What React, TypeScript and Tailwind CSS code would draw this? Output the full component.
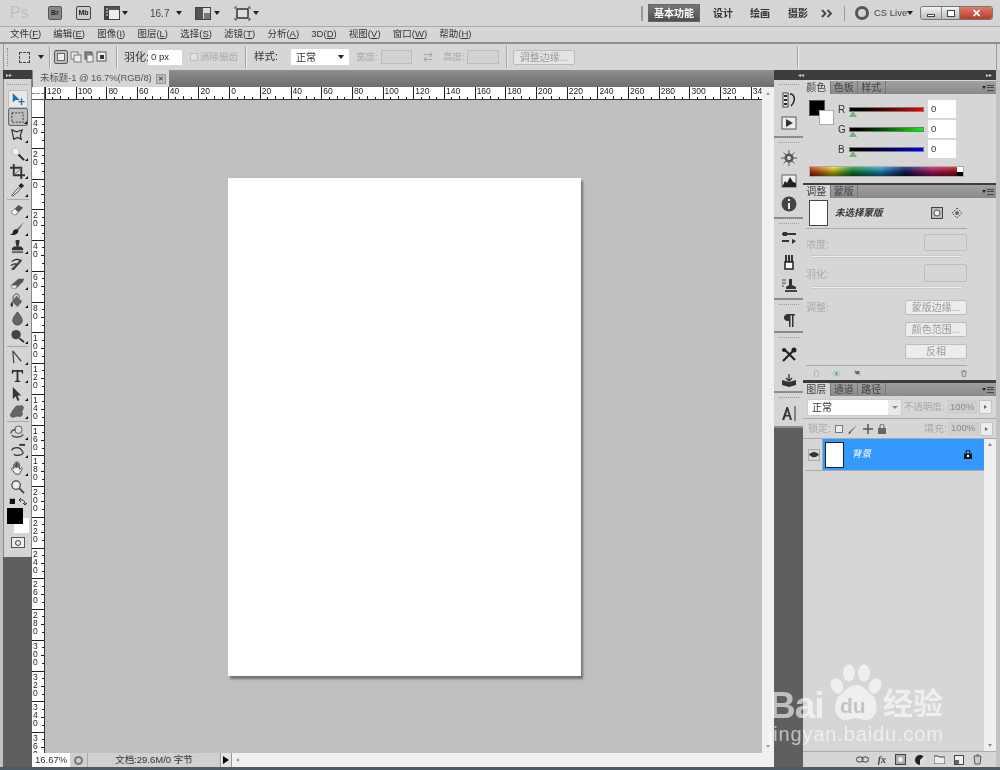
import type { ReactNode } from "react";

const menus = [
  ["文件(", "F", ")"],
  ["编辑(", "E", ")"],
  ["图像(", "I", ")"],
  ["图层(", "L", ")"],
  ["选择(", "S", ")"],
  ["滤镜(", "T", ")"],
  ["分析(", "A", ")"],
  ["3D(", "D", ")"],
  ["视图(", "V", ")"],
  ["窗口(", "W", ")"],
  ["帮助(", "H", ")"],
];

const hLabels = [120, 100, 80, 60, 40, 20, 0, 20, 40, 60, 80, 100, 120, 140, 160, 180, 200, 220, 240, 260, 280, 300, 320, 340];
const vLabels = ["40", "20", "0", "20", "40", "60", "80", "100", "120", "140", "160", "180", "200", "220", "240", "260", "280", "300", "320", "340", "360"];

function Icon({ children, size = 16, view = 16 }: { children: ReactNode; size?: number; view?: number }) {
  return (
    <svg width={size} height={size} viewBox={`0 0 ${view} ${view}`} className="shrink-0">
      {children}
    </svg>
  );
}

// photoshop tools, top to bottom. null is a divider
const tools: (ReactNode | null)[] = [
  <g key="move"><path d="M2 1v11l3-3h5z" fill="#1f6fb0" /><path d="M12 7v8M8.500 11h7" stroke="#1f6fb0" strokeWidth="1.500" /></g>,
  <rect key="marquee" x="2" y="3" width="12" height="10" fill="none" stroke="#333" strokeDasharray="2 1.500" />,
  <path key="lasso" d="M2 2l5 2 6-2-2 6 1 4-4-2-4 2-1-5z" fill="none" stroke="#333" strokeWidth="1.300" />,
  <g key="wand"><path d="M8 8l7 7" stroke="#222" strokeWidth="2" /><circle cx="6" cy="6" r="4" fill="#eee" stroke="#999" strokeDasharray="1.500 1" /></g>,
  <g key="crop"><path d="M4 0v12h12M0 4h12v12" fill="none" stroke="#333" strokeWidth="2" /><path d="M12 4L4 12" stroke="#777" /></g>,
  <g key="dropper"><path d="M2 14l7-8 2 2-8 7z" fill="#eee" stroke="#444" /><path d="M9 4l3-3 3 3-3 3z" fill="#222" /></g>,
  null,
  <g key="heal"><path d="M1 10l8-8 5 3-8 8z" fill="#555" /><path d="M1 10l4-4 4 4-4 3z" fill="#f2f2f2" stroke="#888" /></g>,
  <g key="brush"><path d="M15 1L7 9l1.500 1.500z" fill="#555" /><path d="M8 9c-3-1-5 1-5 3s-2 2-3 2c3 2 8 1 9-3z" fill="#222" /></g>,
  <g key="stamp"><path d="M6 1h4v3l-1 4h3l2 2v2H2v-2l2-2h3L6 4z" fill="#333" /><rect x="2" y="13" width="12" height="2" fill="#666" /></g>,
  <g key="history"><path d="M1 13l9-9 3-2-1 3-8 9z" fill="#444" /><path d="M2 5c3-3 7-3 9-1M1 9c3-2 5-2 6-1" fill="none" stroke="#222" strokeWidth="1.300" /></g>,
  <g key="eraser"><path d="M1 11l8-7h6l-1 3-7 7H2z" fill="#555" /><path d="M1 11h6v3H2z" fill="#eee" stroke="#777" strokeWidth=".6" /></g>,
  <g key="bucket"><path d="M7 3l6 6-5 6-6-6z" fill="#666" /><path d="M4 8c-2-3 0-7 3-7s3 3 3 4" fill="none" stroke="#444" /><path d="M2 9c-1 2-2 3-1 5s3 0 2-3z" fill="#333" /></g>,
  <path key="drop" d="M8 1c2 3 5 6 5 9a5 5 0 01-10 0c0-3 3-6 5-9z" fill="#666" stroke="#444" />,
  <g key="burn"><circle cx="6.500" cy="6" r="5" fill="#444" /><path d="M10 10l5 4" stroke="#222" strokeWidth="2" /></g>,
  null,
  <path key="pen" d="M3 1l1 13M3 1l9 11" fill="none" stroke="#444" strokeWidth="1.300" />,
  <path key="type" d="M2 2h12v4h-1l-1-2H9v9l2 1v1H5v-1l2-1V4H4L3 6H2z" fill="#333" />,
  <path key="select" d="M3 1l9 9H8l2 5-2 1-2-5-3 3z" fill="#333" />,
  <path key="shape" d="M2 9c1-3 3-4 4-6 2-2 3 0 5-1s4 1 3 3-2 3-1 5-2 4-4 3-3 1-6 1-3-3-1-5z" fill="#666" stroke="#555" />,
  null,
  <g key="rotate3d"><circle cx="9" cy="5" r="4" fill="#ddd" stroke="#555" /><path d="M1 9c0-4 4-4 5-4M14 10c-1 3-9 4-12 1" fill="none" stroke="#333" strokeWidth="1.300" /></g>,
  <g key="orbit"><path d="M2 8c0-3 6-4 9-2l3 4c0 3-8 4-10 2" fill="none" stroke="#333" strokeWidth="1.300" /><rect x="10" y="1" width="6" height="2" fill="#333" /></g>,
  <path key="hand" d="M4 8V4c0-1 1.500-1 1.500 0v3-5c0-1 1.500-1 1.500 0v5-5.500c0-1 1.500-1 1.500 0V7V3c0-1 1.500-1 1.500 0v6l1.500-1.500c1-1 2 0 1.500 1l-3 5.500H6L2 9c-1-1 0-2 1-1.500z" fill="#eee" stroke="#444" />,
  <g key="zoom"><circle cx="6.500" cy="6.500" r="4.500" fill="#eee" stroke="#444" strokeWidth="1.300" /><path d="M10 10l5 5" stroke="#444" strokeWidth="2" /></g>,
];

const dockGroups: { gap: string; pad: string; icons: ReactNode[] }[] = [
  {
    gap: "gap-[7px]",
    pad: "pb-[5px]",
    icons: [
      <g key="hist"><rect x="2" y="1" width="5" height="14" fill="#eee" stroke="#444" /><path d="M3 4h3M3 8h3M3 12h3" stroke="#222" strokeWidth="2" /><path d="M9 2c5 0 6 7 1 12" fill="none" stroke="#222" strokeWidth="1.500" /></g>,
      <g key="act"><rect x="1" y="2" width="14" height="12" fill="#eee" stroke="#555" /><path d="M5 4l7 4-7 4z" fill="#333" /></g>,
    ],
  },
  {
    gap: "gap-[7px]",
    pad: "pb-[5px]",
    icons: [
      <g key="nav"><circle cx="8" cy="8" r="4.500" fill="#555" /><path d="M8 0v16M0 8h16M2.500 2.500l11 11M13.500 2.500l-11 11" stroke="#555" /><circle cx="8" cy="8" r="2" fill="#ddd" /></g>,
      <g key="histogram"><rect x="1" y="2" width="14" height="12" fill="#eee" stroke="#666" /><path d="M1 14l3-6 2 2 3-6 3 5 3 1v4z" fill="#222" /></g>,
      <g key="info"><circle cx="8" cy="8" r="7.500" fill="#444" /><path d="M7 3h2v2H7zM7 7h2v6H7z" fill="#eee" /></g>,
    ],
  },
  {
    gap: "gap-[7px]",
    pad: "pb-[5px]",
    icons: [
      <g key="adj"><path d="M1 3h14M1 10h7" stroke="#333" strokeWidth="2" /><path d="M2 1h4v4H2zM11 8l4 2-4 3z" fill="#333" /></g>,
      <g key="brushes"><path d="M5 1v7M8 1v7M11 1v7" stroke="#333" strokeWidth="2" /><path d="M4 8h8v7H4z" fill="#fff" stroke="#222" strokeWidth="1.500" /></g>,
      <g key="clone"><path d="M8 2h3v6l4 2v2H5v-2l3-2z" fill="#333" /><rect x="4" y="13" width="12" height="2" fill="#444" /><path d="M1 3h4M1 6h4M1 9h2" stroke="#444" /></g>,
    ],
  },
  {
    gap: "gap-[7px]",
    pad: "pb-[3px]",
    icons: [<path key="para" d="M7 2h7v1.500h-1.500V15H11V3.500H9.500V15H8V9C4 9 3 7.500 3 5.500S5 2 7 2z" fill="#333" />],
  },
  {
    gap: "gap-[9px]",
    pad: "pb-[3px]",
    icons: [
      <g key="tools"><path d="M2 14L13 3M3 2l11 11" stroke="#222" strokeWidth="2.200" /><circle cx="13" cy="3" r="2.500" fill="#222" /><circle cx="3" cy="3" r="2" fill="#222" /></g>,
      <g key="notes"><path d="M1 8l7 2 7-2v5l-7 2-7-2z" fill="#333" /><path d="M8 2v6M5 6l3 3 3-3" stroke="#333" strokeWidth="1.300" fill="none" /></g>,
    ],
  },
  {
    gap: "gap-[7px]",
    pad: "pb-[5px]",
    icons: [<g key="char"><path d="M1 15L5.500 2h1.500l4 13H9l-1-3.500H4.500L3.300 15zM5 10h2.500L6.300 5.500z" fill="#333" /><path d="M14 1v15" stroke="#333" /></g>],
  },
];

function Caret({ className = "" }: { className?: string }) {
  return <div className={`h-0 w-0 border-x-[3.500px] border-t-[4px] border-x-transparent border-t-[#222] ${className}`} />;
}

function VDivider() {
  return <div className="h-[22px] w-[2px] border-r border-[#eee] bg-[#a3a3a3]" />;
}

function TitleBar() {
  return (
    <div className="flex h-[27px] items-center border-b border-[#aaaaaa] bg-[#d5d5d5] pl-[10px] text-[#333]">
      <div className="w-[38px] text-[16px] text-[#bcbcbc]">Ps</div>
      <div className="flex h-[14px] w-[14px] items-center justify-center rounded-[2px] border border-[#555] bg-[#888] text-[7px] font-bold text-[#222]">Br</div>
      <div className="ml-[14px] flex h-[14px] w-[15px] items-center justify-center rounded-[2px] border border-[#444] bg-[#ccc] text-[7px] font-bold text-[#222]">Mb</div>
      <svg width="16" height="14" viewBox="0 0 16 14" className="ml-[13px]">
        <rect x=".5" y=".5" width="15" height="13" fill="#eee" stroke="#444" />
        <rect x="1" y="1" width="4" height="12" fill="#444" />
        <path d="M2 3h2M2 6h2M2 9h2" stroke="#eee" />
        <rect x="5" y="1" width="10" height="3" fill="#555" />
      </svg>
      <Caret className="ml-[2px]" />
      <div className="ml-[22px] w-[26px] text-[10px] text-[#444]">16.7</div>
      <Caret />
      <svg width="16" height="13" viewBox="0 0 16 13" className="ml-[13px]">
        <rect x=".5" y=".5" width="15" height="12" fill="#ddd" stroke="#444" />
        <rect x="1" y="1" width="7" height="11" fill="#555" />
        <rect x="9" y="6" width="6" height="6" fill="#777" />
      </svg>
      <Caret className="ml-[3px]" />
      <svg width="17" height="15" viewBox="0 0 17 15" className="ml-[14px]">
        <rect x="3" y="3" width="11" height="9" fill="#ddd" stroke="#333" strokeWidth="1.500" />
        <path d="M1 1h2M14 1h2M1 14h2M14 14h2M1 1v2M16 1v2M1 12v2M16 12v2" stroke="#444" />
      </svg>
      <Caret className="ml-[2px]" />
      <div className="ml-[382px] h-[15px] w-[2px] bg-[#999]" />
      <div className="ml-[5px] flex h-[18px] w-[52px] items-center justify-center border border-[#666] bg-gradient-to-b from-[#777] to-[#4f4f4f] text-[10px] font-bold text-white">基本功能</div>
      <div className="ml-[13px] w-[37px] text-[10px] font-bold text-[#333]">设计</div>
      <div className="w-[38px] text-[10px] font-bold text-[#333]">绘画</div>
      <div className="w-[33px] text-[10px] font-bold text-[#333]">摄影</div>
      <svg width="12" height="9" viewBox="0 0 12 9"><path d="M1 1l3.500 3.500L1 8M6.500 1L10 4.500 6.500 8" fill="none" stroke="#444" strokeWidth="1.800" /></svg>
      <div className="ml-[11px] h-[15px] w-px bg-[#999]" />
      <div className="ml-[10px] h-[14px] w-[14px] rounded-full border-[3px] border-[#555]" />
      <div className="ml-[5px] w-[33px] text-[9.500px] text-[#444]">CS Live</div>
      <Caret />
      <div className="ml-[7px] flex h-[14px] w-[73px] overflow-hidden rounded-[3px] border border-[#777]">
        <div className="flex w-[20px] items-end justify-center bg-gradient-to-b from-[#f2f2f2] to-[#bbb] pb-[2px]">
          <div className="h-[3px] w-[8px] border border-[#444] bg-white" />
        </div>
        <div className="flex w-[19px] items-center justify-center border-x border-[#888] bg-gradient-to-b from-[#f2f2f2] to-[#bbb]">
          <div className="h-[7px] w-[8px] border border-[#444] bg-white" />
        </div>
        <div className="flex flex-1 items-center justify-center bg-gradient-to-b from-[#dd7a68] to-[#b93a2a] text-[11px] leading-none font-bold text-white">✕</div>
      </div>
    </div>
  );
}

function MenuBar() {
  return (
    <div className="flex h-[17px] items-center gap-[12.200px] border-b-2 border-[#8f8f8f] bg-[#d6d6d6] pl-[10px] text-[9.500px] text-[#333]">
      {menus.map((m) => (
        <span key={m[1]}>
          {m[0]}
          <span className="underline">{m[1]}</span>
          {m[2]}
        </span>
      ))}
    </div>
  );
}

function OptionsBar() {
  return (
    <div className="mx-[3px] flex h-[26px] items-center border-x border-[#999] bg-[#d6d6d6] text-[10px] text-[#333]">
      <div className="ml-[3px] h-[18px] w-[2px] border-l border-dotted border-[#888]" />
      <div className="ml-[10px] h-[11px] w-[11px] border border-dashed border-[#444]" />
      <Caret className="ml-[8px] border-x-[2.500px] border-t-[3px]" />
      <div className="mr-[3px] ml-[5px]"><VDivider /></div>
      <div className="h-[14px] w-[14px] rounded-[2px] border border-[#555] bg-[#bbb] p-[2px]"><div className="h-full w-full border border-[#666] bg-[#eee]" /></div>
      <svg width="38" height="14" viewBox="0 0 38 14" className="ml-[2px]">
        <rect x="1" y="2" width="7" height="7" fill="#eee" stroke="#777" />
        <rect x="4" y="5" width="7" height="7" fill="#eee" stroke="#777" />
        <rect x="15" y="2" width="7" height="7" fill="#888" stroke="#555" />
        <rect x="17" y="5" width="6" height="7" fill="#eee" stroke="#777" />
        <rect x="27" y="2" width="9" height="9" fill="#eee" stroke="#555" />
        <rect x="30" y="5" width="4" height="4" fill="#333" />
      </svg>
      <div className="mr-[6px] ml-[8px]"><VDivider /></div>
      <span className="w-[24px] text-[11px]">羽化:</span>
      <div className="flex h-[15px] w-[34px] items-center bg-white pl-[3px] text-[9.500px]">0 px</div>
      <div className="ml-[8px] h-[8px] w-[8px] border border-[#bbb] bg-[#e2e2e2]" />
      <span className="ml-[2px] w-[45px] text-[9.500px] text-[#aaa]">消除锯齿</span>
      <VDivider />
      <span className="ml-[7px] w-[37px] text-[10.500px]">样式:</span>
      <div className="flex h-[16px] w-[58px] items-center justify-between bg-white px-[5px] text-[10px]">
        正常
        <Caret className="border-x-[3px] border-t-[3px]" />
      </div>
      <span className="ml-[7px] w-[25px] text-[9.500px] text-[#aaa]">宽度:</span>
      <div className="h-[14px] w-[31px] border border-[#bbb] bg-[#d2d2d2]" />
      <span className="ml-[11px] w-[20px] text-[10px] text-[#999]">⇄</span>
      <span className="w-[24px] text-[9.500px] text-[#aaa]">高度:</span>
      <div className="h-[14px] w-[32px] border border-[#bbb] bg-[#d2d2d2]" />
      <div className="mr-[5px] ml-[7px]"><VDivider /></div>
      <div className="flex h-[15px] w-[62px] items-center justify-center rounded-[2px] border border-[#bbb] bg-[#e4e4e4] text-[10px] text-[#999]">调整边缘...</div>
      <div className="ml-[222px]"><VDivider /></div>
    </div>
  );
}

function Toolbar() {
  return (
    <div className="flex w-[32px] shrink-0 flex-col border-l-[3px] border-[#c2c2c2] bg-[#5f5f5f]">
      <div className="flex h-[9px] items-center bg-[#3d3d3d] pl-[3px] text-[6px] leading-none text-[#ccc]">▸▸</div>
      <div className="flex h-[478px] flex-col items-center border-x border-[#888] bg-[#d5d5d5]">
        <div className="mt-[5px] mb-[3px] h-[3px] w-[22px] border-t border-dotted border-[#999]" />
        {tools.map((t, i) =>
          t === null ? (
            <div key={i} className="my-px h-px w-[22px] bg-[#aaa]" />
          ) : (
            <div
              key={i}
              className={`relative flex h-[18px] w-[20px] items-center justify-center rounded-[2px] ${i === 0 ? "border border-[#bbb] bg-[#e8e8e8]" : ""} ${i === 1 ? "border border-[#666] bg-[#bdbdbd]" : ""}`}
            >
              <Icon size={i === 0 ? 14 : 15}>{t}</Icon>
              {i > 0 && i !== 24 && (
                <div className="absolute right-[0px] bottom-[1px] h-0 w-0 border-b-[3px] border-l-[3px] border-b-[#111] border-l-transparent" />
              )}
            </div>
          ),
        )}
        <div className="mt-[3px] flex w-[20px] items-center justify-between px-[1px]">
          <svg width="8" height="8" viewBox="0 0 8 8"><rect x="0" y="0" width="5" height="5" fill="#eee" stroke="#777" /><rect x="1" y="1" width="5" height="5" fill="#111" /></svg>
          <svg width="9" height="8" viewBox="0 0 9 8"><path d="M1 2c4-1 6 1 6 4M1 2l2-2M1 2l2 2M7 7l-2-2M7 7l2-2" fill="none" stroke="#333" /></svg>
        </div>
        <div className="mt-[2px] mb-[5px] ml-[3px] h-[24px] w-[24px]">
          <div className="relative h-[16px] w-[16px] bg-black" />
          <div className="-mt-[6px] ml-[7px] h-[15px] w-[15px] bg-white" />
        </div>
        <div className="flex h-[11px] w-[14px] items-center justify-center border border-[#555] bg-[#eee]">
          <div className="h-[6px] w-[6px] rounded-full border border-[#444]" />
        </div>
      </div>
      <div className="flex-1" />
    </div>
  );
}

function HRuler() {
  return (
    <div className="flex h-[13px] shrink-0 bg-white">
      <div className="relative h-[13px] w-[13px] shrink-0 border-r border-b border-[#555] bg-white">
        <div className="absolute top-[6px] left-0 w-full border-t border-dashed border-[#777]" />
      </div>
      <div className="flex min-w-0 flex-1 overflow-hidden border-b border-[#333]">
        {hLabels.map((l, i) => (
          <div key={i} className="flex h-full w-[30.700px] shrink-0 flex-col border-l border-[#222]">
            <span className="h-[9px] pl-[1px] text-[8.500px] leading-[9px] text-[#222]">{l}</span>
            <div className="flex h-[3px] justify-around px-[3px]">
              <div className="mt-px h-[2px] w-px bg-[#222]" />
              <div className="h-[3px] w-px bg-[#222]" />
              <div className="mt-px h-[2px] w-px bg-[#222]" />
            </div>
          </div>
        ))}
      </div>
    </div>
  );
}

function VRuler() {
  return (
    <div className="flex w-[13px] shrink-0 flex-col overflow-hidden border-r border-[#333] bg-white">
      <div className="h-[17px] shrink-0" />
      {vLabels.map((l, i) => (
        <div key={i} className="flex h-[30.750px] w-full shrink-0 justify-between border-t border-[#222]">
          <div className="flex flex-col pt-px pl-[1px] text-[8.500px] leading-[8px] text-[#222]">
            {l.split("").map((d, j) => (
              <span key={j}>{d}</span>
            ))}
          </div>
          <div className="flex h-full flex-col items-end justify-around py-[3px]">
            <div className="h-px w-[2px] bg-[#222]" />
            <div className="h-px w-[3px] bg-[#222]" />
            <div className="h-px w-[2px] bg-[#222]" />
          </div>
        </div>
      ))}
    </div>
  );
}

function StatusBar() {
  return (
    <div className="flex h-[14px] shrink-0 items-center bg-[#d6d6d6] text-[9.500px] text-[#333]">
      <div className="flex h-full w-[38px] items-center bg-white pl-[3px]">16.67%</div>
      <div className="flex h-full w-[18px] items-center justify-center border-r border-[#aaa] bg-[#cfcfcf]">
        <div className="h-[9px] w-[9px] rounded-full border-2 border-[#777]" />
      </div>
      <div className="flex h-full w-[133px] items-center justify-center border-r border-[#999] bg-[#d0d0d0]">文档:29.6M/0 字节</div>
      <div className="flex h-full w-[11px] items-center justify-center border-r border-[#999] bg-[#e4e4e4]">
        <div className="h-0 w-0 border-y-[4px] border-l-[6px] border-y-transparent border-l-black" />
      </div>
      <div className="flex h-full flex-1 items-center bg-[#f0f0f0] pl-[4px]">
        <div className="h-0 w-0 border-y-[2.500px] border-r-[3.500px] border-y-transparent border-r-[#999]" />
      </div>
    </div>
  );
}

function Workspace() {
  return (
    <div className="flex w-[742px] shrink-0 flex-col">
      <div className="flex h-[17px] shrink-0 bg-gradient-to-b from-[#8f8f8f] to-[#6e6e6e]">
        <div className="ml-px flex w-[136px] items-center justify-between rounded-t-[1px] bg-[#d6d6d6] pr-[3px] pl-[7px] text-[9.500px] tracking-[-0.1px] text-[#555]">
          未标题-1 @ 16.7%(RGB/8)
          <div className="flex h-[10px] w-[10px] items-center justify-center border border-[#999] bg-[#bbb] text-[7px] leading-none text-[#333]">✕</div>
        </div>
      </div>
      <div className="flex min-h-0 flex-1">
        <div className="flex min-w-0 flex-1 flex-col">
          <HRuler />
          <div className="flex min-h-0 flex-1">
            <VRuler />
            <div className="min-w-0 flex-1 bg-[#bfbfbf] pt-[78px] pl-[183px]">
              <div className="h-[498px] w-[353px] bg-white shadow-[2px_3px_2px_rgba(0,0,0,0.4)]" />
            </div>
          </div>
          <StatusBar />
        </div>
        <div className="flex w-[12px] shrink-0 flex-col items-center bg-[#f0f0f0]">
          <div className="mt-[5px] h-0 w-0 border-x-[2.500px] border-b-[3.500px] border-x-transparent border-b-[#999]" />
          <div className="mt-auto mb-[19px] h-0 w-0 border-x-[2.500px] border-t-[3.500px] border-x-transparent border-t-[#999]" />
        </div>
      </div>
    </div>
  );
}

function Dock() {
  return (
    <div className="flex w-[29px] shrink-0 flex-col bg-[#5f5f5f]">
      {dockGroups.map((g, i) => (
        <div key={i} className={`flex flex-col items-center border-b-2 border-[#8c8c8c] bg-[#d5d5d5] pt-[4px] pl-px ${g.gap} ${g.pad}`}>
          <div className="h-px w-[20px] border-t border-dotted border-[#999]" />
          {g.icons.map((ic, j) => (
            <Icon key={j}>{ic}</Icon>
          ))}
        </div>
      ))}
    </div>
  );
}

function Tabs({ names }: { names: string[] }) {
  return (
    <div className="flex h-[13px] shrink-0 bg-gradient-to-b from-[#a0a0a0] to-[#8a8a8a] text-[10px] leading-[13px]">
      {names.map((n, i) => (
        <div key={n} className={`flex w-[27.500px] items-center justify-center border-r border-[#777] ${i === 0 ? "bg-[#d6d6d6] text-[#444]" : "text-[#444]"}`}>
          {n}
        </div>
      ))}
      <div className="flex flex-1 items-center justify-end gap-px pr-[2px] text-[9px] leading-none text-[#333]">
        <div className="h-0 w-0 border-x-[2px] border-t-[3px] border-x-transparent border-t-[#222]" />
        <div className="flex h-[6px] w-[7px] flex-col justify-between">
          <div className="h-px bg-[#444]" />
          <div className="h-px bg-[#444]" />
          <div className="h-px bg-[#444]" />
        </div>
      </div>
    </div>
  );
}

function ColorRow({ label, bar }: { label: string; bar: string }) {
  return (
    <div className="flex h-[18px] items-center text-[10px] text-[#333]">
      <span className="w-[11px]">{label}</span>
      <div className="relative h-[5px] w-[75px] border border-[#777]">
        <div className={`h-full w-full ${bar}`} />
        <div className="absolute top-[3px] -left-[1px] h-0 w-0 border-x-[4px] border-b-[6px] border-x-transparent border-b-[#7cb07c]" />
      </div>
      <div className="ml-[4px] flex h-[18px] w-[28px] items-center bg-white pl-[3px] text-[9.500px]">0</div>
    </div>
  );
}

function ColorPanel() {
  return (
    <div className="flex h-[103px] shrink-0 flex-col pt-px">
      <Tabs names={["颜色", "色板", "样式"]} />
      <div className="flex pt-[6px] pl-[6px]">
        <div className="w-[29px]">
          <div className="relative h-[25px] w-[25px]">
            <div className="h-[16px] w-[16px] border border-[#555] bg-black" />
            <div className="absolute top-[10px] left-[10px] h-[15px] w-[15px] border border-[#aaa] bg-white" />
          </div>
        </div>
        <div className="flex flex-col gap-[2px]">
          <ColorRow label="R" bar="bg-gradient-to-r from-black to-[#ff0000]" />
          <ColorRow label="G" bar="bg-gradient-to-r from-black to-[#00ff00]" />
          <ColorRow label="B" bar="bg-gradient-to-r from-black to-[#0000ff]" />
        </div>
      </div>
      <div className="mt-[8px] ml-[6px] flex h-[11px] w-[155px] border border-[#aaa]">
        <div className="flex-1 bg-[linear-gradient(to_right,#e0241c_0%,#f6ec13_16%,#0fa03c_29%,#1fa9e6_48%,#0b1a6b_65%,#d0187a_83%,#cc1111_100%)]">
          <div className="h-full w-full bg-gradient-to-b from-white/20 to-black/60" />
        </div>
        <div className="flex w-[6px] flex-col">
          <div className="flex-1 bg-white" />
          <div className="flex-1 bg-black" />
        </div>
      </div>
    </div>
  );
}

function SoftButton({ label, className = "" }: { label: string; className?: string }) {
  return (
    <div className={`mr-[29px] ml-auto flex h-[15px] w-[62px] items-center justify-center rounded-[2px] border border-[#bdbdbd] bg-[#ececec] text-[10px] text-[#999] ${className}`}>
      {label}
    </div>
  );
}

function MaskPanel() {
  return (
    <div className="flex h-[197px] shrink-0 flex-col border-t-2 border-[#3d3d3d] text-[10px] text-[#aaa]">
      <Tabs names={["调整", "蒙版"]} />
      <div className="mr-[29px] ml-[3px] flex h-[31px] shrink-0 items-center border-b border-[#a8a8a8] pl-[3px]">
        <div className="h-[26px] w-[19px] border border-[#444] bg-white" />
        <span className="ml-[7px] text-[9.500px] font-bold text-[#333] italic">未选择蒙版</span>
        <svg width="12" height="12" viewBox="0 0 12 12" className="ml-[48px]"><rect x=".5" y=".5" width="11" height="11" fill="#bbb" stroke="#444" /><circle cx="6" cy="6" r="3" fill="#eee" stroke="#555" /></svg>
        <svg width="12" height="12" viewBox="0 0 12 12" className="ml-[8px]"><path d="M6 1l5 5-5 5-5-5z" fill="none" stroke="#555" strokeDasharray="2 1" /><circle cx="6" cy="6" r="2" fill="#666" /></svg>
      </div>
      <div className="flex h-[26px] shrink-0 pt-[5px] pl-[3px]">
        <span className="mt-[3px]">浓度:</span>
        <div className="mr-[29px] ml-auto h-[17px] w-[43px] rounded-[2px] border border-[#bdbdbd]" />
      </div>
      <div className="ml-[7px] h-[3px] w-[153px] shrink-0 rounded-full border border-[#c8c8c8] bg-[#eee]" />
      <div className="flex h-[28px] shrink-0 pt-[6px] pl-[3px]">
        <span className="mt-[3px]">羽化:</span>
        <div className="mr-[29px] ml-auto h-[18px] w-[43px] rounded-[2px] border border-[#bdbdbd]" />
      </div>
      <div className="ml-[7px] h-[3px] w-[153px] shrink-0 rounded-full border border-[#c8c8c8] bg-[#eee]" />
      <div className="flex shrink-0 pt-[11px] pl-[3px]">
        <span>调整:</span>
        <SoftButton label="蒙版边缘..." />
      </div>
      <SoftButton label="颜色范围..." className="mt-[7px] shrink-0" />
      <SoftButton label="反相" className="mt-[7px] shrink-0" />
      <div className="mt-[6px] mr-[29px] ml-[3px] flex h-[15px] shrink-0 items-center gap-[13px] border-t border-[#a8a8a8] pl-[8px]">
        <div className="h-[7px] w-[7px] rounded-full border border-dotted border-[#999]" />
        <svg width="14" height="9" viewBox="0 0 14 9"><path d="M1 4.500C4 0 10 0 13 4.500 10 9 4 9 1 4.500z" fill="#cfe5e0" stroke="#6fa9a0" /><circle cx="7" cy="4.500" r="2" fill="#5b8e88" /></svg>
        <svg width="11" height="10" viewBox="0 0 11 10"><path d="M1 2h8l-1 5H3z" fill="#666" /><path d="M0 0l11 10" stroke="#d06060" /></svg>
        <svg width="9" height="11" viewBox="0 0 9 11" className="ml-[87px]"><path d="M1 2h7l-1 8H2zM3 1h3" fill="#ccc" stroke="#666" /></svg>
      </div>
    </div>
  );
}

function LayersPanel() {
  return (
    <div className="flex min-h-0 flex-1 flex-col border-t-[3px] border-[#3d3d3d] text-[10px] text-[#aaa]">
      <Tabs names={["图层", "通道", "路径"]} />
      <div className="flex h-[23px] shrink-0 items-center border-b border-[#aaa] pl-[4px]">
        <div className="flex h-[17px] w-[95px] items-center justify-between rounded-[2px] border border-[#ccc] bg-[#e9e9e9]">
          <div className="flex h-full w-[80px] items-center bg-white pl-[4px] text-[#333]">正常</div>
          <div className="mr-[3px] h-0 w-0 border-x-[3px] border-t-[3px] border-x-transparent border-t-[#888]" />
        </div>
        <span className="ml-[2px] w-[43px] text-[9.500px]">不透明度:</span>
        <div className="flex h-[14px] w-[31px] items-center bg-[#cfcfcf] pl-[3px] text-[9.500px] text-[#888]">100%</div>
        <div className="ml-px flex h-[14px] w-[13px] items-center justify-center border border-[#c4c4c4] bg-[#ececec]">
          <div className="h-0 w-0 border-y-[2.500px] border-l-[3px] border-y-transparent border-l-[#666]" />
        </div>
      </div>
      <div className="flex h-[20px] shrink-0 items-center border-b border-[#aaa] pl-[5px]">
        <span className="w-[24px]">锁定:</span>
        <div className="ml-[3px] flex items-center gap-[5px]">
          <div className="h-[8px] w-[8px] border border-[#777] bg-[#eee]" />
          <svg width="10" height="10" viewBox="0 0 10 10"><path d="M9 1L2 7l1 1z" fill="#666" /><path d="M2 7L0 10l3-1z" fill="#444" /></svg>
          <svg width="10" height="10" viewBox="0 0 10 10"><path d="M5 0v10M0 5h10" stroke="#555" strokeWidth="1.500" /></svg>
          <svg width="8" height="10" viewBox="0 0 8 10"><rect y="4" width="8" height="6" fill="#666" /><path d="M2 4V2a2 2 0 014 0v2" fill="none" stroke="#666" /></svg>
        </div>
        <span className="ml-[38px] w-[24px]">填充:</span>
        <div className="flex h-[14px] w-[31px] items-center bg-[#cfcfcf] pl-[3px] text-[9.500px] text-[#888]">100%</div>
        <div className="ml-px flex h-[14px] w-[13px] items-center justify-center border border-[#c4c4c4] bg-[#ececec]">
          <div className="h-0 w-0 border-y-[2.500px] border-l-[3px] border-y-transparent border-l-[#666]" />
        </div>
      </div>
      <div className="flex min-h-0 flex-1 pl-[2px]">
        <div className="flex-1">
          <div className="flex h-[32px] border-b border-[#aaa]">
            <div className="flex w-[18px] items-center justify-center border-r border-[#aaa]">
              <div className="flex h-[12px] w-[12px] items-center justify-center border border-[#aaa]">
                <svg width="10" height="7" viewBox="0 0 10 7"><path d="M0 3.500C3 0 7 0 10 3.500 7 7 3 7 0 3.500z" fill="#333" /></svg>
              </div>
            </div>
            <div className="flex flex-1 items-center bg-[#3399ff] pl-[2px]">
              <div className="h-[26px] w-[19px] border border-[#123] bg-white" />
              <span className="ml-[8px] text-[9.500px] text-white italic">背景</span>
              <svg width="8" height="9" viewBox="0 0 8 9" className="mr-[12px] ml-auto"><rect y="3.500" width="8" height="5.500" fill="#111" /><path d="M2 3.500V2a2 2 0 014 0v1.500" fill="none" stroke="#111" /><rect x="3" y="5" width="2" height="2" fill="#fff" /></svg>
            </div>
          </div>
        </div>
        <div className="flex w-[12px] shrink-0 flex-col items-center bg-[#efefef]">
          <div className="mt-[4px] h-0 w-0 border-x-[2.500px] border-b-[3.500px] border-x-transparent border-b-[#888]" />
          <div className="mt-auto mb-[4px] h-0 w-0 border-x-[2.500px] border-t-[3.500px] border-x-transparent border-t-[#888]" />
        </div>
      </div>
      <div className="flex h-[16px] shrink-0 items-center justify-end gap-[9px] border-t border-[#aaa] pr-[14px]">
        <svg width="13" height="7" viewBox="0 0 13 7"><rect x=".5" y="1" width="6.500" height="5" rx="2.500" fill="none" stroke="#444" /><rect x="6" y="1" width="6.500" height="5" rx="2.500" fill="none" stroke="#444" /></svg>
        <span className="font-['Liberation_Serif',serif] text-[10px] font-bold text-[#444] italic">fx</span>
        <svg width="11" height="11" viewBox="0 0 11 11"><rect x=".5" y=".5" width="10" height="10" fill="#aaa" stroke="#444" /><circle cx="5.500" cy="5.500" r="2.500" fill="#eee" /></svg>
        <svg width="10" height="10" viewBox="0 0 10 10"><circle cx="5" cy="5" r="5" fill="#222" /><path d="M5 5L9 1A5 5 0 015 10z" fill="#ddd" /></svg>
        <svg width="11" height="9" viewBox="0 0 11 9"><path d="M0 1h4l1 1h6v7H0z" fill="#eee" stroke="#444" /></svg>
        <svg width="10" height="10" viewBox="0 0 10 10"><rect x=".5" y=".5" width="9" height="9" fill="#eee" stroke="#444" /><rect x="1" y="5" width="4" height="4" fill="#666" /></svg>
        <svg width="9" height="11" viewBox="0 0 9 11"><path d="M1 2h7l-1 8H2zM3 1h3" fill="#ccc" stroke="#555" /></svg>
      </div>
    </div>
  );
}

function Panels() {
  return (
    <div className="flex w-[193px] shrink-0 flex-col bg-[#d6d6d6]">
      <ColorPanel />
      <MaskPanel />
      <LayersPanel />
    </div>
  );
}

function Watermark() {
  return (
    <div className="pointer-events-none absolute top-[662px] left-[768px] h-[108px] w-[190px] text-white/60">
      <svg width="58" height="58" viewBox="0 0 58 58" className="absolute top-[2px] left-[60px]" fill="currentColor">
        <ellipse cx="9" cy="22" rx="6" ry="8" transform="rotate(-25 9 22)" />
        <ellipse cx="21" cy="9" rx="6" ry="8.500" />
        <ellipse cx="36" cy="9" rx="6" ry="8.500" />
        <ellipse cx="47" cy="22" rx="6" ry="8" transform="rotate(25 47 22)" />
        <path d="M28 21c8 0 10 6 16 10 7 5 7 25-6 25-4 0-7-2-10-2s-6 2-10 2c-13 0-13-20-6-25 6-4 8-10 16-10z" />
      </svg>
      <span className="absolute top-[25px] left-[1px] font-['Liberation_Sans',sans-serif] text-[37px] leading-none font-bold tracking-[-1px]">Bai</span>
      <span className="absolute top-[33px] left-[72px] font-['Liberation_Sans',sans-serif] text-[21px] leading-none font-bold text-[#c4c4c4]">du</span>
      <span className="absolute top-[27px] left-[115px] text-[30px] leading-none font-bold">经验</span>
      <span className="absolute top-[62px] left-0 font-['Liberation_Sans',sans-serif] text-[20px] leading-none tracking-[0.85px]">jingyan.baidu.com</span>
    </div>
  );
}

export default function App() {
  return (
    <div className="relative flex h-[770px] w-[1000px] flex-col overflow-hidden bg-[#d6d6d6] font-['Liberation_Sans','Noto_Sans_CJK_SC',sans-serif] whitespace-nowrap blur-[0.4px]">
      <TitleBar />
      <MenuBar />
      <OptionsBar />
      <div className="flex min-h-0 flex-1">
        <Toolbar />
        <Workspace />
        <div className="flex w-[222px] shrink-0 flex-col">
          <div className="flex h-[10px] shrink-0 items-center justify-between bg-[#3d3d3d] px-[4px] text-[6px] leading-none text-[#ccc]">
            <span className="ml-[20px]">◂◂</span>
            <span>▸▸</span>
          </div>
          <div className="flex min-h-0 flex-1">
            <Dock />
            <Panels />
          </div>
        </div>
        <div className="w-[4px] shrink-0 bg-[#c2c2c2]" />
      </div>
      <div className="h-[3px] shrink-0 bg-[#4a5a66]" />
      <Watermark />
    </div>
  );
}
